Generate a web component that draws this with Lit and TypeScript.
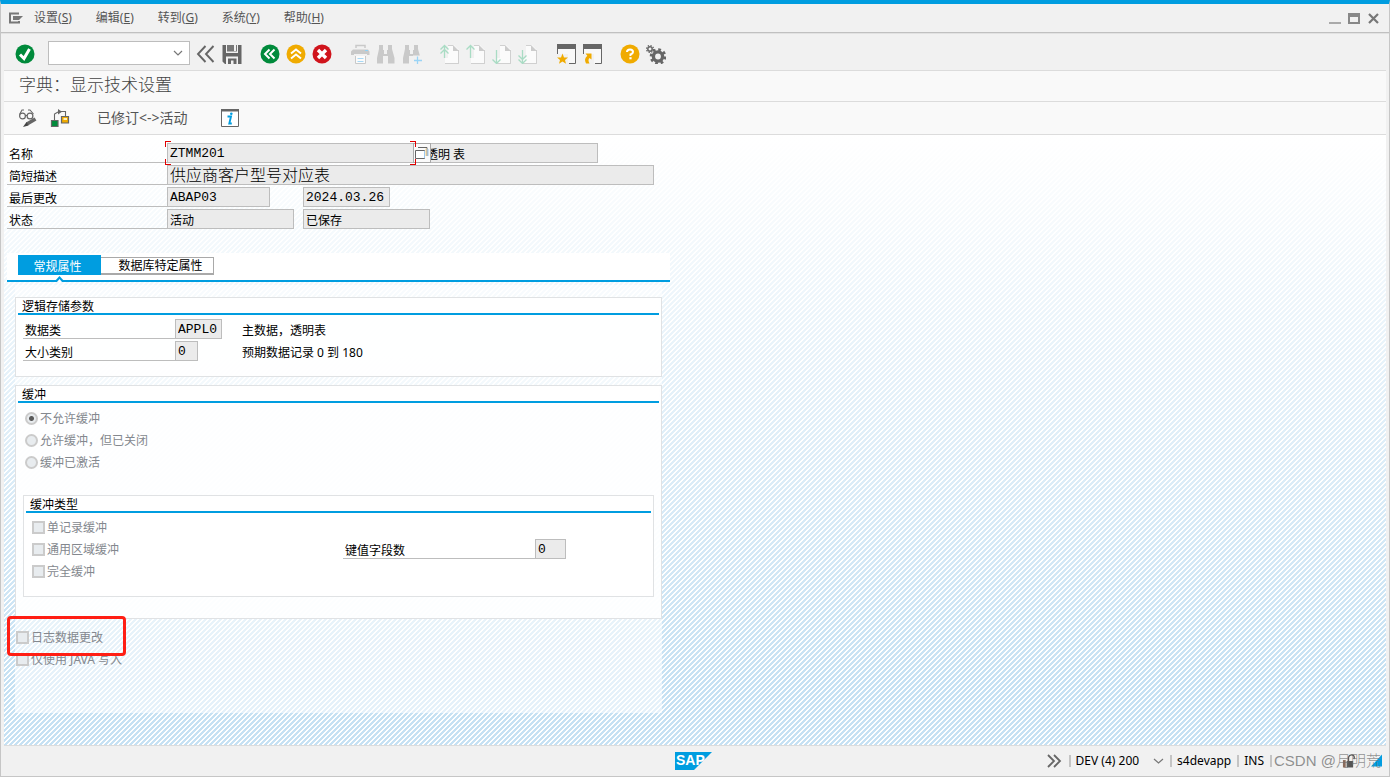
import { LitElement, html, css, svg, TemplateResult } from "lit";
import { customElement, property } from "lit/decorators.js";

const GREY = "#666666";
const FADED = "#c9c9c9";
const AMBER = "#f0ab00";
const GREEN = "#008a3b";

const page = (arrow: TemplateResult) => svg`
  <path d="M5.5 17V19.5H18.5V6.5" fill="none" stroke="#cccccc"/>
  <path d="M8 1H14L18.500 5.500V19H5V14H8Z" fill="#fbfbfb"/>
  <path d="M8 1.500H13M18.500 6V19.500H5" fill="none" stroke="#d0d0d0"/>
  <path d="M13 1L19 7H13Z" fill="#cccccc"/>
  <g fill="none" stroke="#a9dcc4" stroke-width="1.300">${arrow}</g>`;

const windowFrame = svg`
  <path d="M1 0H20V5H1Z" fill="${GREY}"/>
  <path d="M1.500 5V10M19.500 5V19.500H13" fill="none" stroke="${GREY}"/>
  <path d="M2 5H19V19H12V10H2Z" fill="#f8f8f8"/>`;

const binoculars = svg`
  <path d="M3 1H7V6H8V10H11V6H12V1H16V5L18.500 14V19.500H12V12H7V19.500H1V14L3 5Z" fill="${FADED}"/>`;

const ICONS: Record<string, TemplateResult> = {
  enter: svg`<circle cx="10" cy="10" r="9.500" fill="${GREEN}"/><path d="M5 10.500L9 14.500L14.500 5" fill="none" stroke="#fff" stroke-width="3"/>`,
  collapse: svg`<path d="M9.500 2L2 10L9.500 18M17.500 2L10 10L17.500 18" fill="none" stroke="${GREY}" stroke-width="1.900"/>`,
  save: svg`<path d="M.5 1H4V9H16V1H19.500V20H3L.5 17.500Z" fill="${GREY}"/><path d="M5 1H15V7.500H5Z" fill="#777"/><path d="M12 1H14V7H12Z" fill="#f1f1f1"/><path d="M4 12.500H16V20H4Z" fill="#f1f1f1"/><path d="M6 14.500H14.500V20H11.500V16.500H9V20H6Z" fill="${GREY}"/>`,
  back: svg`<circle cx="10" cy="10" r="9.500" fill="${GREEN}"/><path d="M9.500 5.500L5 10L9.500 14.500M14.500 5.500L10 10L14.500 14.500" fill="none" stroke="#fff" stroke-width="2"/>`,
  exit: svg`<circle cx="10" cy="10" r="9.500" fill="${AMBER}"/><path d="M5 9.500L10 5.500L15 9.500M5 14.500L10 10.500L15 14.500" fill="none" stroke="#fff" stroke-width="2"/>`,
  cancel: svg`<circle cx="10" cy="10" r="9.500" fill="#d0141c"/><path d="M6 6L14 14M14 6L6 14" fill="none" stroke="#fff" stroke-width="3.400"/>`,
  print: svg`<path d="M6 4V1.500H15V4" fill="none" stroke="${FADED}" stroke-width="1.500"/><path d="M3 5.500H18L19.500 7.500V11H17V10H4V11H1V7.500Z" fill="${FADED}"/><path d="M15 6.500H18" stroke="#8fd0f5"/><path d="M5.500 12V19.500H15.500V12" fill="#fbfbfb" stroke="${FADED}"/><path d="M7.500 14.500H13.500M7.500 17.500H13.500" stroke="#a6d8f5"/>`,
  find: binoculars,
  findNext: svg`${binoculars}<path d="M11 11.500H20V20H11Z" fill="#f1f1f1"/><path d="M15.500 12.500V20M12 16.500H20" stroke="#9ad4f6" stroke-width="1.300"/>`,
  first: page(svg`<path d="M4.500 2V14M.5 5.500L4.500 1.500L8.500 5.500M.5 9.500L4.500 5.500L8.500 9.500"/>`),
  previous: page(svg`<path d="M4.500 2V14M.5 5.500L4.500 1.500L8.500 5.500"/>`),
  next: page(svg`<path d="M4.500 6V19M.5 15.500L4.500 19.500L8.500 15.500"/>`),
  last: page(svg`<path d="M4.500 6V19M.5 11.500L4.500 15.500L8.500 11.500M.5 15.500L4.500 19.500L8.500 15.500"/>`),
  session: svg`${windowFrame}<path d="M6.500 9.500L8 13.500H12L9 16L10 19.800L6.500 17.500L3 19.800L4 16L1 13.500H5Z" fill="${AMBER}"/>`,
  shortcut: svg`${windowFrame}<path d="M3.500 9.500H9.500V15.500L7.500 14Q5.500 16 7.500 19.500H4Q1.500 15 5.300 11.800Z" fill="${AMBER}"/>`,
  help: svg`<circle cx="10" cy="10" r="9.500" fill="${AMBER}"/><path d="M7 8Q7 5.500 10 5.500T13 8Q13 9.500 10.500 10.500V12" fill="none" stroke="#fff" stroke-width="2"/><path d="M9.400 13.200H11.600V15.300H9.400Z" fill="#fff"/>`,
  settings: svg`<circle cx="12" cy="12.500" r="4.600" fill="none" stroke="${GREY}" stroke-width="3.400"/><circle cx="12" cy="12.500" r="7" fill="none" stroke="${GREY}" stroke-width="2.600" stroke-dasharray="2.750 2.750"/><circle cx="4" cy="5" r="2.200" fill="none" stroke="${GREY}" stroke-width="1.500"/><circle cx="4" cy="5" r="3.500" fill="none" stroke="${GREY}" stroke-width="1.200" stroke-dasharray="1.375 1.375"/>`,
  toggle: svg`<circle cx="4.500" cy="8" r="2.900" fill="none" stroke="${GREY}" stroke-width="1.200"/><circle cx="12" cy="8" r="2.900" fill="none" stroke="${GREY}" stroke-width="1.200"/><path d="M1.500 6.500L4 2H6M10 2H12L15.500 6M7.400 7.500H9" fill="none" stroke="${GREY}" stroke-width="1.100"/><path d="M17.500 11L9 16" stroke="${GREY}" stroke-width="3.600"/><path d="M8.500 14L10.500 17.500L5 19Z" fill="#444"/>`,
  tree: svg`<path d="M4.500 12V6L8 4M8 3.500H15.500V9" fill="none" stroke="${GREY}" stroke-width="1.100"/><path d="M8 1V6.500L12 3.700Z" fill="${GREY}"/><path d="M1.500 12.500H8V18.500H1.500Z" fill="${GREEN}" stroke="${GREY}" stroke-width="1.200"/><path d="M11.500 8.500H18.500V15H11.500Z" fill="${AMBER}" stroke="${GREY}" stroke-width="1.200"/><path d="M13.500 10H17V12H13.500Z" fill="#fff0c0"/>`,
  info: svg`<path d="M1.500 2H18.500V18.500H1.500Z" fill="#fff" stroke="${GREY}"/><path d="M1 1H19V3.500H1Z" fill="${GREY}"/><path d="M7.500 8.500H11L9.300 15.500H11.800" fill="none" stroke="#009de0" stroke-width="1.900"/><circle cx="11.300" cy="5.800" r="1.300" fill="#009de0"/>`,
};

@customElement("sap-icon")
class SapIcon extends LitElement {
  @property() name = "";
  static styles = css`
    :host { display: block; width: 20px; height: 20px; }
    .glyph { display: block; width: 20px; height: 20px; }
  `;
  render() {
    return html`<svg class="glyph" viewBox="0 0 20 20" aria-hidden="true">${ICONS[this.name]}</svg>`;
  }
}

const MENUS = [
  ["设置", "S"],
  ["编辑", "E"],
  ["转到", "G"],
  ["系统", "Y"],
  ["帮助", "H"],
];

const TOOL_GROUPS = [
  [["collapse", "隐藏"], ["save", "保存"]],
  [["back", "返回"], ["exit", "退出"], ["cancel", "取消"]],
  [["print", "打印"], ["find", "查找"], ["findNext", "继续查找"]],
  [["first", "首页"], ["previous", "上一页"], ["next", "下一页"], ["last", "末页"]],
  [["session", "新建会话"], ["shortcut", "创建快捷方式"]],
  [["help", "帮助"], ["settings", "定制本地布局"]],
];

@customElement("app-root")
class AppRoot extends LitElement {
  static styles = css`
    :host {
      display: block;
      font: 12px/16px "Noto Sans", "Noto Sans CJK SC", sans-serif;
      color: #000;
    }
    * { box-sizing: border-box; }
    button, input, select { font: inherit; color: inherit; margin: 0; border-radius: 0; }
    button { background: none; border: 0; padding: 0; }
    .window {
      min-height: 100vh;
      display: flex;
      flex-direction: column;
      background: #f1f1f1;
      border: 1px solid #c6c6c6;
      border-top: 4px solid #009de0;
    }
    .menubar {
      display: flex;
      align-items: center;
      height: 29px;
      padding: 0 10px 0 7px;
      border-bottom: 1px solid #c0c0c0;
      box-shadow: 0 1px 0 #e2e2e2;
      color: #555;
    }
    .menus { display: flex; gap: 24px; margin-left: 10px; flex: 1; }
    .winbtns { display: flex; gap: 7px; }
    .winbtns svg, .menubar > svg { display: block; }
    .body { display: flex; flex-direction: column; flex: 1; margin: 0 3px; }
    .toolbar {
      display: flex;
      align-items: center;
      height: 38px;
      padding: 5px 0 0 11px;
      border-bottom: 1px solid #dcdcdc;
    }
    .command {
      width: 142px;
      height: 24px;
      margin: 0 6px 2px 13px;
      border: 1px solid #bdbdbd;
      background: #fff url("data:image/svg+xml,%3Csvg xmlns='http://www.w3.org/2000/svg' width='10' height='6'%3E%3Cpath d='M1 1L5 5L9 1' fill='none' stroke='%23777' stroke-width='1.200'/%3E%3C/svg%3E") no-repeat right 6px center;
      appearance: none;
    }
    .groups { display: flex; gap: 18px; }
    .group { display: flex; gap: 6px; }
    .title {
      height: 31px;
      margin: 0;
      padding: 0 15px;
      background: #f9f9f9;
      border-bottom: 1px solid #dcdcdc;
      font-size: 17px;
      line-height: 28px;
      font-weight: 300;
      color: #444;
    }
    .actions {
      display: flex;
      align-items: center;
      gap: 12px;
      height: 33px;
      padding: 0 14px;
      background: #f9f9f9;
      border-bottom: 1px solid #dcdcdc;
      color: #555;
    }
    .textaction { font-size: 14px; line-height: 20px; margin: 0 20px 0 15px; }
    .canvas {
      flex: 1;
      padding: 8px 3px 31px;
      background:
        linear-gradient(#fff, rgba(255, 255, 255, 0) 90%),
        linear-gradient(135deg, #c6e1f3 25%, #fff 25%, #fff 50%, #c6e1f3 50%, #c6e1f3 75%, #fff 75%) 0 0 / 5px 5px;
    }
    .rows { display: flex; flex-direction: column; gap: 2px; }
    .row { display: flex; height: 20px; }
    .lbl {
      width: 160px;
      padding: 4px 0 0 2px;
      border-bottom: 1px solid #bdbdbd;
      line-height: 15px;
      white-space: nowrap;
    }
    .field {
      height: 20px;
      padding: 0 2px;
      border: 1px solid #bdbdbd;
      background: #ebebeb;
      outline: none;
      min-width: 0;
    }
    .plain { padding: 2px 2px 0; }
    .mono { font-family: "Liberation Mono", "Noto Sans CJK SC", monospace; font-size: 13px; }
    .large { font-size: 16px; font-weight: 300; padding-bottom: 3px; }
    .slot { width: 136px; display: flex; }
    .w-name { width: 247px; }
    .w-desc { width: 487px; }
    .w-user { width: 103px; }
    .w-date { width: 87px; }
    .w-status { width: 127px; }
    .w-kind { width: 184px; padding-left: 12px; border-left: 0; }
    .w-class { width: 47px; }
    .w-size { width: 23px; }
    .w-key { width: 31px; }
    .focus { position: relative; display: flex; }
    .corners { position: absolute; left: -2px; top: -2px; width: 251px; height: 24px; pointer-events: none; }
    .corner { position: absolute; width: 6px; height: 6px; border: 0 solid #e00000; }
    .tl { left: 0; top: 0; border-width: 1px 0 0 1px; }
    .bl { left: 0; bottom: 0; border-width: 0 0 1px 1px; }
    .tr { right: 0; top: 0; border-width: 1px 1px 0 0; }
    .br { right: 0; bottom: 0; border-width: 0 1px 1px 0; }
    .f4 {
      position: absolute;
      left: 246px;
      top: 0;
      width: 18px;
      height: 20px;
      border: 1px solid #a8a8a8;
      background: #fafafa;
    }
    .f4 svg { display: block; }
    .tabs {
      display: flex;
      align-items: flex-start;
      position: relative;
      width: 663px;
      max-width: 100%;
      height: 29px;
      margin-top: 24px;
      padding: 2px 11px 0;
      background: #fff;
      border-bottom: 2px solid #009de0;
    }
    .tab { height: 18px; margin-top: 2px; width: 113px; padding: 1px 0 0 7px; line-height: 14px; border: 1px solid #a9a9a9; border-left: 0; border-bottom-width: 2px; }
    .tab.active { height: 20px; margin-top: 0; width: 83px; padding: 3px 4px 0 0; background: #009de0; color: #fff; border: 0; line-height: 16px; }
    .notch { position: absolute; left: 47px; bottom: -2px; width: 11px; height: 6px; }
    .panel {
      width: 647px;
      max-width: 100%;
      margin: 3px 0 0 8px;
      padding: 12px 0 43px;
      background: rgba(255, 255, 255, 0.55);
    }
    .box {
      margin: 0;
      padding: 0 2px;
      border: 1px solid #e0e2e4;
      background: rgba(255, 255, 255, 0.85);
    }
    .boxtitle {
      margin: 0;
      padding: 1px 4px 0;
      height: 17px;
      font-size: 12px;
      line-height: 16px;
      font-weight: 400;
      background: #fff;
      border-bottom: 2px solid #009de0;
    }
    .storage { padding-bottom: 15px; }
    .storage .rows { padding: 4px 5px 0; }
    .storage .lbl { width: 152px; }
    .storage .slot { width: 65px; }
    .note { padding: 4px 0 0 2px; line-height: 15px; }
    .buffer { margin-top: 8px; padding-bottom: 21px; }
    .choices { display: flex; flex-direction: column; gap: 2px; }
    .choice { display: flex; align-items: center; gap: 2px; height: 20px; color: #84888e; white-space: nowrap; }
    .choice input {
      appearance: none;
      width: 13px;
      height: 13px;
      margin-bottom: 2px;
      border: 2px solid #cbcbcb;
      background: #e8ecef;
    }
    .choice input[type="radio"] { border-radius: 50%; }
    .choice input[type="radio"]:checked { background: radial-gradient(circle, #5a5a5a 0 2px, #e8ecef 3px); }
    .radios { padding: 6px 7px 0; }
    .inner { margin: 22px 5px 0; padding-bottom: 14px; }
    .innerbody { display: flex; padding: 5px 6px 0; }
    .innerbody .choices { width: 311px; }
    .keyrow { display: flex; height: 20px; margin-top: 21px; }
    .keyrow .lbl { width: 192px; }
    .flags { position: relative; padding: 9px 1px 0; }
    .mark { position: absolute; left: -8px; top: -3px; width: 119px; height: 40px; border: 3px solid #ff1e14; border-radius: 4px; pointer-events: none; }
    .statusbar {
      display: grid;
      grid-template-columns: 1fr auto 1fr;
      align-items: center;
      height: 31px;
      border-top: 1px solid #dcdcdc;
      padding: 0 4px 1px 0;
    }
    .statusbar svg { display: block; }
    .logo { grid-column: 2; }
    .logotext { font: bold 14px "Liberation Sans", Arial, sans-serif; }
    .status { display: flex; align-items: center; justify-content: flex-end; }
    .part { padding: 0 6px 0 5px; border-left: 2px solid #c4c4c4; line-height: 12px; display: flex; align-items: center; gap: 14px; white-space: nowrap; }
    .expand { margin-right: 7px; }
    .tail { position: relative; display: flex; align-items: center; width: 112px; padding-left: 70px; border-left: 2px solid #c4c4c4; height: 12px; }
    .grip { margin-left: 15px; }
    .watermark { position: absolute; left: 2px; top: -5px; font: 300 15px/22px "Liberation Sans", "Noto Sans CJK SC", sans-serif; color: rgba(110, 110, 110, 0.75); white-space: nowrap; }
  `;

  private tool([name, label]: string[]) {
    return html`<button title=${label} aria-label=${label}><sap-icon name=${name}></sap-icon></button>`;
  }

  private check(id: string, label: string) {
    return html`<label class="choice" for=${id}><input type="checkbox" id=${id} disabled />${label}</label>`;
  }

  private radio(id: string, label: string, checked = false) {
    return html`<label class="choice" for=${id}><input type="radio" name="buffering" id=${id} .checked=${checked} disabled />${label}</label>`;
  }

  private field(id: string, value: string, classes: string, label = "") {
    return html`<input id=${id} class="field ${classes}" .value=${value} readonly aria-label=${label || value} />`;
  }

  private header() {
    return html`
      <div class="rows">
        <div class="row">
          <label class="lbl" for="name">名称</label>
          <div class="focus">
            ${this.field("name", "ZTMM201", "mono w-name", "名称")}
            ${this.field("kind", "透明 表", "plain w-kind", "类型")}
            <button class="f4" aria-label="输入帮助">
              <svg width="16" height="18" viewBox="0 0 16 18">
                <path d="M4 3.500H13V12" fill="none" stroke="#666" />
                <path d="M14 5V12" stroke="#9cc8ee" />
                <path d="M12 4.500V12" stroke="#f6d28a" />
                <path d="M1.500 6.500H10.500V14.500H1.500Z" fill="#fff" stroke="#666" />
                <path d="M10.500 7V14" stroke="#9cc8ee" />
              </svg>
            </button>
            <div class="corners">
              <i class="corner tl"></i><i class="corner bl"></i><i class="corner tr"></i><i class="corner br"></i>
            </div>
          </div>
        </div>
        <div class="row">
          <label class="lbl" for="desc">简短描述</label>
          ${this.field("desc", "供应商客户型号对应表", "large w-desc", "简短描述")}
        </div>
        <div class="row">
          <label class="lbl" for="user">最后更改</label>
          <div class="slot">${this.field("user", "ABAP03", "mono w-user", "最后更改")}</div>
          ${this.field("date", "2024.03.26", "mono w-date", "更改日期")}
        </div>
        <div class="row">
          <label class="lbl" for="state">状态</label>
          <div class="slot">${this.field("state", "活动", "plain w-status", "状态")}</div>
          ${this.field("saved", "已保存", "plain w-status", "保存状态")}
        </div>
      </div>
    `;
  }

  private panel() {
    return html`
      <div class="panel" role="tabpanel">
        <section class="box storage">
          <h2 class="boxtitle">逻辑存储参数</h2>
          <div class="rows">
            <div class="row">
              <label class="lbl" for="class">数据类</label>
              <div class="slot">${this.field("class", "APPL0", "mono w-class", "数据类")}</div>
              <span class="note">主数据，透明表</span>
            </div>
            <div class="row">
              <label class="lbl" for="size">大小类别</label>
              <div class="slot">${this.field("size", "0", "mono w-size", "大小类别")}</div>
              <span class="note">预期数据记录 0 到 180</span>
            </div>
          </div>
        </section>
        <section class="box buffer">
          <h2 class="boxtitle">缓冲</h2>
          <div class="choices radios">
            ${this.radio("none", "不允许缓冲", true)}
            ${this.radio("off", "允许缓冲，但已关闭")}
            ${this.radio("on", "缓冲已激活")}
          </div>
          <section class="box inner">
            <h2 class="boxtitle">缓冲类型</h2>
            <div class="innerbody">
              <div class="choices">
                ${this.check("single", "单记录缓冲")}
                ${this.check("generic", "通用区域缓冲")}
                ${this.check("full", "完全缓冲")}
              </div>
              <div class="keyrow">
                <label class="lbl" for="keys">键值字段数</label>
                ${this.field("keys", "0", "mono w-key", "键值字段数")}
              </div>
            </div>
          </section>
        </section>
        <div class="choices flags">
          ${this.check("log", "日志数据更改")}
          ${this.check("java", "仅使用 JAVA 写入")}
          <div class="mark"></div>
        </div>
      </div>
    `;
  }

  private statusbar() {
    return html`
      <footer class="statusbar">
        <svg class="logo" width="37" height="18" viewBox="0 0 37 18" role="img" aria-label="SAP">
          <path d="M0 0H37L19 18H0Z" fill="#009de0" />
          <text class="logotext" x="1" y="13" fill="#fff">SAP</text>
        </svg>
        <div class="status">
          <button class="expand" aria-label="展开">
            <svg width="16" height="14" viewBox="0 0 16 14">
              <path d="M2 1L8 7L2 13M8 1L14 7L8 13" fill="none" stroke="#666" stroke-width="1.800" />
            </svg>
          </button>
          <button class="part">
            DEV (4) 200
            <svg width="11" height="6" viewBox="0 0 11 6"><path d="M1 1L5.500 5L10 1" fill="none" stroke="#777" stroke-width="1.200" /></svg>
          </button>
          <span class="part">s4devapp</span>
          <span class="part">INS</span>
          <div class="tail">
            <svg width="15" height="16" viewBox="0 0 15 16">
              <path d="M1 7H4V15H1Z" fill="#8a6a5a" />
              <path d="M5 8H12V15H5Z" fill="#555" />
              <path d="M7 8V4Q8 1 11 1.500T13 6" fill="none" stroke="#555" stroke-width="1.500" />
            </svg>
            <svg class="grip" width="12" height="13" viewBox="0 0 12 13"><path d="M12 0V13H0Z" fill="#009de0" /></svg>
            <span class="watermark">CSDN @月明荒</span>
          </div>
        </div>
      </footer>
    `;
  }

  render() {
    return html`
      <div class="window">
        <nav class="menubar">
          <svg width="16" height="12" viewBox="0 0 16 12">
            <path d="M11 1.500H2V10.500H11V9" fill="none" stroke="#777" stroke-width="2" />
            <path d="M5 4H15L11 8H5Z" fill="#777" />
          </svg>
          <div class="menus">
            ${MENUS.map(([text, key]) => html`<button>${text}(<u>${key}</u>)</button>`)}
          </div>
          <div class="winbtns">
            <button aria-label="最小化"><svg width="12" height="12" viewBox="0 0 12 12"><path d="M0 10H12V12H0Z" fill="#aaa" /></svg></button>
            <button aria-label="最大化"><svg width="12" height="12" viewBox="0 0 12 12"><path d="M0 1H12V12H0ZM2 5V10H10V5Z" fill="#888" fill-rule="evenodd" /></svg></button>
            <button aria-label="关闭"><svg width="12" height="12" viewBox="0 0 12 12"><path d="M2 2L11 11M11 2L2 11" stroke="#777" stroke-width="2.200" /></svg></button>
          </div>
        </nav>
        <div class="body">
          <div class="toolbar">
            ${this.tool(["enter", "回车"])}
            <select class="command" aria-label="命令"><option></option></select>
            <div class="groups">
              ${TOOL_GROUPS.map((g) => html`<div class="group">${g.map((t) => this.tool(t))}</div>`)}
            </div>
          </div>
          <h1 class="title">字典：显示技术设置</h1>
          <div class="actions">
            ${this.tool(["toggle", "显示/更改"])}
            ${this.tool(["tree", "层次"])}
            <button class="textaction">已修订&lt;-&gt;活动</button>
            ${this.tool(["info", "信息"])}
          </div>
          <main class="canvas">
            ${this.header()}
            <div class="tabs" role="tablist">
              <button class="tab active" role="tab" aria-selected="true">常规属性</button>
              <button class="tab" role="tab" aria-selected="false">数据库特定属性</button>
              <svg class="notch" viewBox="0 0 11 6"><path d="M0 6L5.500 0L11 6Z" fill="#009de0" /><path d="M3 6L5.500 3L8 6Z" fill="#fff" /></svg>
            </div>
            ${this.panel()}
          </main>
          ${this.statusbar()}
        </div>
      </div>
    `;
  }
}
